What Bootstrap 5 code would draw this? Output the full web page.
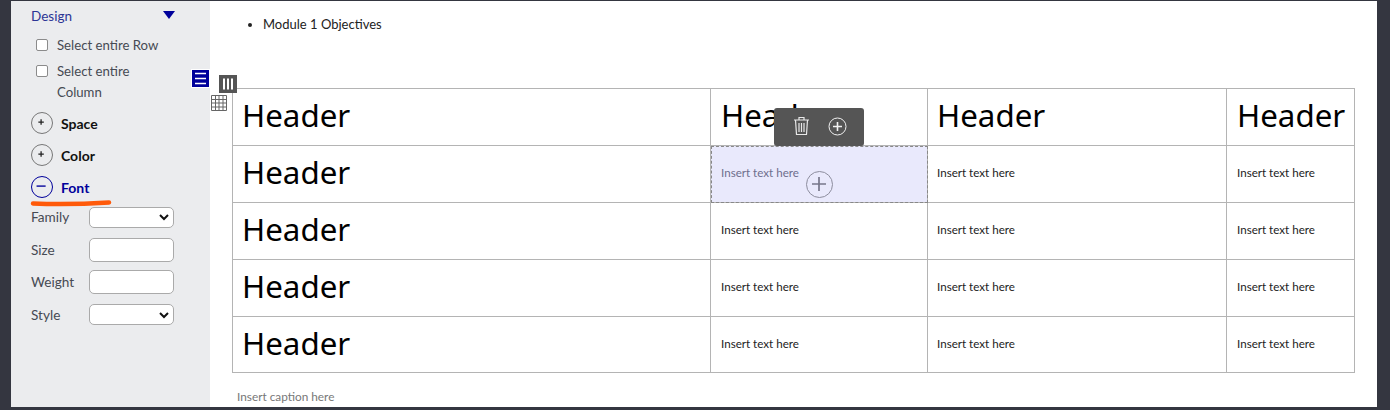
<!DOCTYPE html>
<html lang="en"><head><meta charset="utf-8"><title>Table design</title>
<link href="https://cdn.jsdelivr.net/npm/bootstrap@5.3.0/dist/css/bootstrap.min.css" rel="stylesheet">
<style>
html,body{height:410px;overflow:hidden}
body{background:#343640;font-family:"Lato",sans-serif;font-size:13.200px;color:#444}
.frame{height:410px;padding:1px 13px 3px 11px}
.side{width:199px;background:#ebecee;padding:6px 36px 0 20px;flex:none;color:#464a53}
.design-h{color:#2c3595;font-size:13.500px;line-height:18px;height:28px}
.tri{width:0;height:0;border-left:6.500px solid transparent;border-right:6.500px solid transparent;border-top:8px solid #00009b;margin:4px -1px 0 0}
.chk{width:12px;height:12px;border:1.500px solid #8b8b8b;border-radius:2px;background:#fff;margin:0 9px 0 5px;flex:none;appearance:none;-webkit-appearance:none}
.chk-row{line-height:21px;margin-bottom:5px;font-size:13.200px}
.chk-row.last{margin-bottom:4px}
.acc{height:32px;font-weight:700;color:#111;font-size:14px;gap:8px}
.acc.on{color:#00009b;margin-bottom:-2px}
.circ{width:22px;height:22px;border-radius:50%;border:1.500px solid #777;position:relative;flex:none;background:transparent}
.circ svg{display:block;width:100%;height:100%}
.acc.on .circ{border-color:#00009b}
.frow{height:32.500px}
.frow label{width:58px;flex:none;font-size:13.600px}
.fsel,.finp{width:85px;flex:none;border:1.500px solid #aaa;border-radius:5px;background:#fff;height:21px;padding:0}
.finp{height:24px}
.fsel{appearance:none;-webkit-appearance:none;background-repeat:no-repeat;background-position:right 4px center;background-size:10px 8px;background-image:url("data:image/svg+xml,%3Csvg xmlns='http://www.w3.org/2000/svg' viewBox='0 0 10 8'%3E%3Cpath d='M1 2l4 4 4-4' fill='none' stroke='%23111' stroke-width='2'/%3E%3C/svg%3E")}
.main{flex:1;background:#fff;position:relative;min-width:0;color:#222}
.objs{position:absolute;left:53px;top:14px;font-size:13px;line-height:18px;margin:0;padding:0;list-style:disc;color:#222}
.wrap-t{padding:87px 22px 0 22px}
.grid-t{table-layout:fixed;width:1122px;border-collapse:collapse;margin:0}
.grid-t td{border:1px solid #b4b4b4;height:57px;padding:0 9px 2px;vertical-align:middle;font-size:11.600px;color:#222}
.grid-t td:nth-child(2),.grid-t td:nth-child(4){padding-left:10px}
.grid-t tr:last-child td{height:56px}
.grid-t td.hd{font-family:"Noto Sans",sans-serif;font-size:31.300px;color:#000;line-height:1;padding-bottom:2px}
.grid-t td.sel{background:#e9e9fc;color:#6e6e8d;outline:1px dashed #888;outline-offset:-1px;position:relative}
.capt{padding:16px 5px 0;font-size:11.800px;color:#777;line-height:16px}
.tb{position:absolute;left:564px;top:107px;width:90px;height:38px;background:#555;border-radius:3px;gap:18px;padding:0 0 2px 2px}
.addc{position:absolute;left:596px;top:170px;width:27px;height:27px;border:1.500px solid #8d8d9e;border-radius:50%}
.ic{position:absolute;display:block}
.ic-row{left:-19px;top:68px;width:19px;height:19px;background:#00009b;border:1px solid #fff}
.ic-col{left:9px;top:74px;width:18px;height:18px;background:#555}
.ic-tab{left:0;top:93px;width:18px;height:18px}
.mark-or{position:absolute;left:30px;top:197px;width:84px;height:10px;z-index:3}
</style></head><body>
<div class="frame d-flex">
 <aside class="side">
  <div class="design-h d-flex justify-content-between"><span>Design</span><span class="tri"></span></div>
  <div class="chk-row d-flex"><input class="chk mt-1" type="checkbox" aria-label="row"><span>Select entire Row</span></div>
  <div class="chk-row last d-flex"><input class="chk mt-1" type="checkbox" aria-label="col"><span>Select entire Column</span></div>
  <div class="acc d-flex align-items-center"><span class="circ"><svg viewBox="0 0 22 22"><path d="M7 10h6M10 7v6" stroke="#222" stroke-width="1.400"/></svg></span>Space</div>
  <div class="acc d-flex align-items-center"><span class="circ"><svg viewBox="0 0 22 22"><path d="M7 10h6M10 7v6" stroke="#222" stroke-width="1.400"/></svg></span>Color</div>
  <div class="acc on d-flex align-items-center"><span class="circ"><svg viewBox="0 0 22 22"><path d="M5 10h10" stroke="#00009b" stroke-width="1.500"/></svg></span>Font</div>
  <div>
  <div class="frow d-flex align-items-center"><label>Family</label><select class="fsel" aria-label="family"></select></div>
  <div class="frow d-flex align-items-center"><label>Size</label><input class="finp" aria-label="size"></div>
  <div class="frow d-flex align-items-center"><label>Weight</label><input class="finp" aria-label="weight"></div>
  <div class="frow d-flex align-items-center"><label>Style</label><select class="fsel" aria-label="style"></select></div>
  </div>
 </aside>
 <main class="main">
  <ul class="objs"><li>Module 1 Objectives</li></ul>
  <span class="ic ic-row"><svg class="d-block" viewBox="0 0 17 17" width="17" height="17"><path d="M3 3.500h11M3 8.500h11M3 13.500h11" stroke="#fff" stroke-width="1.700"/></svg></span>
  <span class="ic ic-col"><svg class="d-block" viewBox="0 0 18 18" width="18" height="18"><path d="M5 3.500v11M9 3.500v11M13 3.500v11" stroke="#fff" stroke-width="2"/></svg></span>
  <span class="ic ic-tab"><svg class="d-block" viewBox="0 0 18 18" width="18" height="18"><path fill="#fff" d="M0 0h18v18H0z"/><path d="M1.500 1.500h15v15h-15zM1.500 5.500h15M1.500 9h15M1.500 13h15M5.500 1.500v15M9 1.500v15M13 1.500v15" fill="none" stroke="#666"/></svg></span>
  <div class="wrap-t">
   <table class="grid-t">
    <colgroup><col style="width:478px"><col style="width:217px"><col style="width:299px"><col style="width:128px"></colgroup>
    <tr><td class="hd">Header</td><td class="hd">Header</td><td class="hd">Header</td><td class="hd">Header</td></tr>
    <tr><td class="hd">Header</td><td class="sel">Insert text here</td><td>Insert text here</td><td>Insert text here</td></tr>
    <tr><td class="hd">Header</td><td>Insert text here</td><td>Insert text here</td><td>Insert text here</td></tr>
    <tr><td class="hd">Header</td><td>Insert text here</td><td>Insert text here</td><td>Insert text here</td></tr>
    <tr><td class="hd">Header</td><td>Insert text here</td><td>Insert text here</td><td>Insert text here</td></tr>
   </table>
   <div class="capt">Insert caption here</div>
  </div>
  <div class="tb d-flex align-items-center justify-content-center">
   <svg width="17" height="20" viewBox="0 0 17 20" fill="none" stroke="#e8e8e8" stroke-width="1.200"><path d="M1 4h15M6 4V1.500h5V4M2.500 4l1 14.500h10l1-14.500M6 7v9M8.500 7v9M11 7v9"/></svg>
   <svg width="19" height="19" viewBox="0 0 19 19" fill="none" stroke="#f2f2f2"><circle cx="9.500" cy="9.500" r="8.500" stroke-width="1"/><path d="M5 9.500h9M9.500 5v9" stroke-width="1.600"/></svg>
  </div>
  <span class="addc"><svg class="d-block" viewBox="0 0 24 24" width="24" height="24"><path d="M5 12h14M12 5v14" stroke="#77778a" stroke-width="1.700"/></svg></span>
 </main>
</div>
<svg class="mark-or" viewBox="0 0 84 10"><path d="M3 6.500 C25 7.500 55 7 79 5.500" fill="none" stroke="#ff5a0a" stroke-width="4.500" stroke-linecap="round"/></svg>
</body></html>
